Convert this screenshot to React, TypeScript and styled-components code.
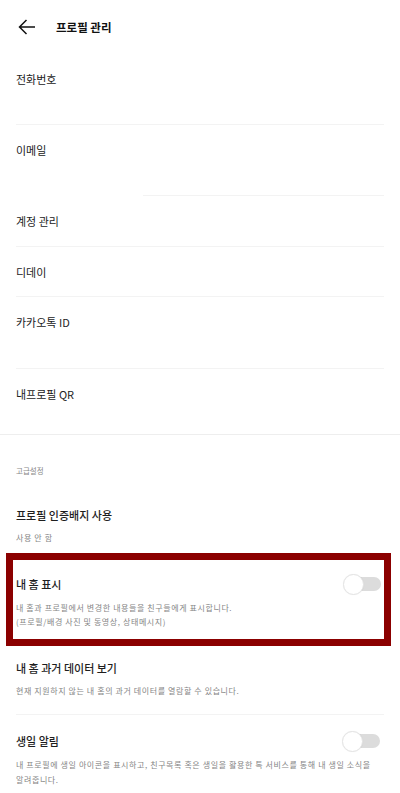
import React from 'react';
import styled, { createGlobalStyle } from 'styled-components';

const GlobalStyle = createGlobalStyle`
  body {
    margin: 0;
    background: #ffffff;
    font-family: "Noto Sans CJK KR", "Noto Sans", sans-serif;
    color: #222222;
  }
`;

const Page = styled.div`
  width: 400px;
  background: #ffffff;
`;

const Header = styled.div`
  height: 54px;
  display: flex;
  align-items: center;
  padding-left: 18px;
  gap: 20px;
`;

const BackButton = styled.button`
  border: none;
  background: none;
  padding: 0;
  width: 18px;
  height: 16px;
  display: flex;
  align-items: center;
  justify-content: center;
`;

const HeaderTitle = styled.h1`
  margin: 0;
  font-size: 11.5px;
  font-weight: 700;
  line-height: 16px;
  color: #111111;
`;

const InfoRow = styled.div<{ $h: number }>`
  height: ${(p) => p.$h}px;
  padding: 18px 16px 0;
  box-sizing: border-box;
  font-size: 11px;
  line-height: 14px;
  color: #222222;
`;

const Divider = styled.div<{ $left?: number; $full?: boolean; $color?: string }>`
  height: 1px;
  background: ${(p) => p.$color || '#f3f3f3'};
  margin: ${(p) => (p.$full ? '0' : `0 16px 0 ${p.$left ?? 16}px`)};
`;

const SectionLabel = styled.div`
  padding: 30px 16px 0;
  font-size: 7.5px;
  line-height: 12px;
  color: #888888;
`;

const SettingItem = styled.div<{ $pt: number; $pb: number; $highlight?: boolean }>`
  padding: ${(p) => p.$pt}px ${(p) => (p.$highlight ? 3 : 16)}px ${(p) => p.$pb}px
    ${(p) => (p.$highlight ? 3 : 16)}px;
  ${(p) =>
    p.$highlight &&
    `
    margin: 0 9px 0 6px;
    border: 7px solid #8b0000;
  `}
`;

const TitleRow = styled.div<{ $switchInset?: number }>`
  display: flex;
  align-items: center;
  justify-content: space-between;
  height: 16px;
  padding-right: ${(p) => p.$switchInset ?? 0}px;
`;

const SettingTitle = styled.div`
  font-size: 11px;
  line-height: 16px;
  font-weight: 500;
  color: #1e1e1e;
`;

const SettingDesc = styled.div<{ $lh: number; $mt: number }>`
  margin-top: ${(p) => p.$mt}px;
  font-size: 8px;
  line-height: ${(p) => p.$lh}px;
  letter-spacing: 0.6px;
  color: #858585;
  white-space: nowrap;
`;

const Toggle = styled.div`
  position: relative;
  width: 38px;
  height: 21px;
  flex-shrink: 0;
`;

const ToggleTrack = styled.div`
  position: absolute;
  left: 10px;
  right: 0;
  top: 3.5px;
  height: 14px;
  border-radius: 7px;
  background: #dcdcdc;
`;

const ToggleKnob = styled.div`
  position: absolute;
  left: 0;
  top: 0;
  width: 21px;
  height: 21px;
  box-sizing: border-box;
  border-radius: 50%;
  background: #ffffff;
  border: 1px solid #e4e4e4;
  box-shadow: 0 0 1px rgba(0, 0, 0, 0.08);
`;

const Switch = () => (
  <Toggle>
    <ToggleTrack />
    <ToggleKnob />
  </Toggle>
);

const BackArrow = () => (
  <svg width="18" height="16" viewBox="0 0 18 16" fill="none">
    <path d="M17 8H1.5M8.5 1L1.5 8L8.5 15" stroke="#111" strokeWidth="1.5" />
  </svg>
);

const App: React.FC = () => {
  return (
    <Page>
      <GlobalStyle />
      <Header>
        <BackButton aria-label="뒤로">
          <BackArrow />
        </BackButton>
        <HeaderTitle>프로필 관리</HeaderTitle>
      </Header>

      <InfoRow $h={70}>전화번호</InfoRow>
      <Divider />
      <InfoRow $h={70}>이메일</InfoRow>
      <Divider $left={143} />
      <InfoRow $h={50}>계정 관리</InfoRow>
      <Divider />
      <InfoRow $h={49}>디데이</InfoRow>
      <Divider />
      <InfoRow $h={71}>카카오톡 ID</InfoRow>
      <Divider />
      <InfoRow $h={65}>내프로필 QR</InfoRow>
      <Divider $full $color="#eeeeee" />

      <SectionLabel>고급설정</SectionLabel>

      <SettingItem $pt={30} $pb={9}>
        <TitleRow>
          <SettingTitle>프로필 인증배지 사용</SettingTitle>
        </TitleRow>
        <SettingDesc $lh={12} $mt={9}>사용 안 함</SettingDesc>
      </SettingItem>

      <SettingItem $pt={16} $pb={10} $highlight>
        <TitleRow>
          <SettingTitle>내 홈 표시</SettingTitle>
          <Switch />
        </TitleRow>
        <SettingDesc $lh={14} $mt={9}>
          내 홈과 프로필에서 변경한 내용들을 친구들에게 표시합니다.
          <br />
          (프로필/배경 사진 및 동영상, 상태메시지)
        </SettingDesc>
      </SettingItem>

      <SettingItem $pt={14} $pb={16}>
        <TitleRow>
          <SettingTitle>내 홈 과거 데이터 보기</SettingTitle>
        </TitleRow>
        <SettingDesc $lh={14} $mt={8}>
          현재 지원하지 않는 내 홈의 과거 데이터를 열람할 수 있습니다.
        </SettingDesc>
      </SettingItem>
      <Divider />

      <SettingItem $pt={18} $pb={10}>
        <TitleRow $switchInset={4}>
          <SettingTitle>생일 알림</SettingTitle>
          <Switch />
        </TitleRow>
        <SettingDesc $lh={15} $mt={8}>
          내 프로필에 생일 아이콘을 표시하고, 친구목록 혹은 생일을 활용한 톡 서비스를 통해 내 생일 소식을
          <br />
          알려줍니다.
        </SettingDesc>
      </SettingItem>
    </Page>
  );
};

export default App;
